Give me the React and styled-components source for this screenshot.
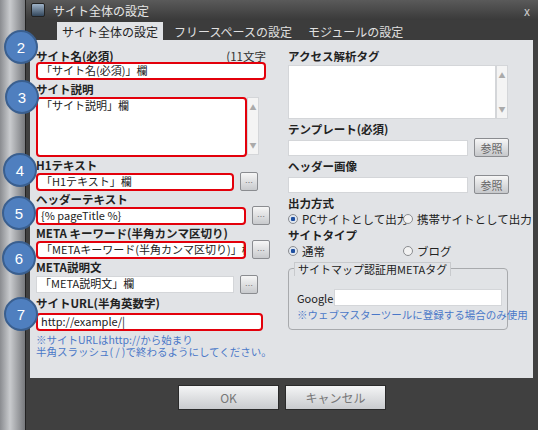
import styled, { createGlobalStyle } from 'styled-components';

const Global = createGlobalStyle`
  html, body { margin: 0; padding: 0; }
  body { font-family: "Noto Sans CJK JP", "Liberation Sans", sans-serif; font-size: 11px; color: #222; }
`;

const Screen = styled.div`
  width: 538px; height: 430px; display: flex; overflow: hidden; position: relative;
  background: #4a4c50;
`;
const SideStrip = styled.div`
  width: 25px; flex: none;
  background: linear-gradient(90deg, #8a8c90, #c9cbce 40%, #77797d);
`;
const Dialog = styled.div`
  flex: 1; display: flex; flex-direction: column; background: #404040;
  border-left: 1px solid #222; min-height: 0;
`;
const TitleBar = styled.div`
  height: 20px; flex: none; display: flex; align-items: center; gap: 8px; padding: 0 8px 0 5px;
  background: linear-gradient(#5a5a5a, #3a3a3a); color: #e6e6e6; font-size: 12px; overflow: hidden;
`;
const TitleIcon = styled.div`
  width: 12px; height: 12px; border-radius: 2px;
  background: linear-gradient(#9fb3c8, #33475c); border: 1px solid #222;
`;
const Close = styled.div`margin-left: auto; color: #ccc; font-size: 12px;`;
const Tabs = styled.div`
  height: 20px; flex: none; display: flex; align-items: flex-end; padding-left: 31px; gap: 6px;
  background: #3c3c3c; overflow: hidden;
`;
const Tab = styled.div`
  height: 18px; padding: 0 5px; display: flex; align-items: center; font-size: 12px;
  color: ${p => (p.$active ? '#222' : '#e0e0e0')};
  background: ${p => (p.$active ? '#e1e3e6' : 'transparent')};
`;
const Panel = styled.div`
  height: 338px; flex: none; box-sizing: border-box; margin: 0 5px 0 4px; background: #e1e3e6; overflow: hidden;
  display: grid; grid-template-columns: 232px 243px; column-gap: 20px; padding: 10px 0 0 6px;
`;
const Col = styled.div`display: flex; flex-direction: column;`;
const Label = styled.div`
  height: 12px; line-height: 12px; font-weight: bold; font-size: 11.5px;
  margin-top: ${p => p.$mt || 0}px; display: flex; justify-content: space-between; white-space: nowrap;
`;
const Hint = styled.span`font-weight: normal; color: #333; padding-right: 2px;`;
const Row = styled.div`display: flex; align-items: center; gap: 6px; margin-top: ${p => p.$mt || 0}px;`;
const Input = styled.div`
  box-sizing: border-box; height: ${p => p.$h || 18}px; width: ${p => p.$w}px; flex: none;
  background: #fff; padding: 0 3px; white-space: nowrap; overflow: hidden; font-size: 11px;
  line-height: 13px; border: ${p => (p.$red ? '2.5px solid #e3000b' : '1px solid #d4d6d9')};
  border-radius: ${p => (p.$red ? 4 : 0)}px;
`;
const AreaWrap = styled.div`display: flex; margin-top: ${p => p.$mt || 0}px;`;
const Scroll = styled.div`
  width: 12px; height: ${p => p.$h}px; flex: none; background: #f4f4f4; border: 1px solid #d4d6d9;
  display: flex; flex-direction: column; justify-content: space-between; align-items: center;
  color: #aaa; font-size: 7px; padding: 4px 0; box-sizing: border-box;
`;
const Dots = styled.div`
  width: 18px; height: 19px; flex: none; box-sizing: border-box; border: 1px solid #8a8c90;
  border-radius: 2px; background: linear-gradient(#f6f6f6, #c8cacd); color: #777;
  font-size: 8px; display: flex; align-items: flex-end; justify-content: center; padding-bottom: 2px;
`;
const RefBtn = styled.div`
  width: 35px; height: 19px; flex: none; box-sizing: border-box; border: 1px solid #8a8c90;
  border-radius: 2px; background: linear-gradient(#f6f6f6, #c6c8cb); color: #666;
  font-size: 11px; display: flex; align-items: center; justify-content: center;
`;
const Note = styled.div`color: #4a78c8; font-size: 10.5px; line-height: 12px; margin-top: 3px; white-space: nowrap;`;
const Radios = styled.div`display: grid; grid-template-columns: 115px 130px; margin-top: 3px; white-space: nowrap;`;
const Radio = styled.div`display: flex; align-items: center; gap: 4px; font-size: 11.5px; line-height: 14px;`;
const Dot = styled.span`
  width: 10px; height: 10px; border-radius: 50%; box-sizing: border-box; flex: none;
  border: 1px solid #8a8c90; background: ${p => (p.$on ? 'radial-gradient(#1f4fa0 35%, #dfe6ef 45%)' : '#f2f2f2')};
`;
const Fieldset = styled.div`
  margin-top: 10px; border: 1px solid #a8aaad; border-radius: 4px; height: 62px; width: 220px;
  position: relative; padding: 20px 0 0 8px; box-sizing: border-box; overflow: visible;
`;
const Legend = styled.div`
  position: absolute; top: -7px; left: 5px; background: #e1e3e6; padding: 0 3px;
  font-size: 11px; line-height: 13px; white-space: nowrap; border: 1px solid #c8cacd; border-bottom: none;
`;
const Footer = styled.div`flex: 1; display: flex; justify-content: center; gap: 6px; padding-top: 7px;`;
const FootBtn = styled.div`
  width: 99px; height: 23px; display: flex; align-items: center; justify-content: center;
  background: linear-gradient(#f4f5f6, #c9cbce); border: 1px solid #2a2a2a; color: #777; font-size: 12px;
`;
const Badge = styled.div`
  position: absolute; left: ${p => p.$x - 17}px; top: ${p => p.$y - 17}px; width: 34px; height: 34px;
  border-radius: 50%; box-sizing: border-box; background: #4f7fbf; border: 2px solid #3a5f8f;
  color: #fff; font-size: 15px; display: flex; align-items: center; justify-content: center;
  font-family: "Liberation Sans", sans-serif;
`;

const badges = [[2, 21, 47], [3, 22, 97], [4, 20, 170], [5, 19, 213], [6, 19, 258], [7, 21, 314]];

export default function App() {
  return (
    <Screen>
      <Global />
      <SideStrip />
      <Dialog>
        <TitleBar><TitleIcon /><span>サイト全体の設定</span><Close>x</Close></TitleBar>
        <Tabs>
          <Tab $active>サイト全体の設定</Tab>
          <Tab>フリースペースの設定</Tab>
          <Tab>モジュールの設定</Tab>
        </Tabs>
        <Panel>
          <Col>
            <Label>サイト名(必須)<Hint>(11文字</Hint></Label>
            <Input $red $w={230} $h={18}>「サイト名(必須)」欄</Input>
            <Label $mt={3}>サイト説明</Label>
            <AreaWrap $mt={2}>
              <Input $red $w={211} $h={60}>「サイト説明」欄</Input>
              <Scroll $h={58}><span>▲</span><span>▼</span></Scroll>
            </AreaWrap>
            <Label $mt={2}>H1テキスト</Label>
            <Row $mt={1}><Input $red $w={198} $h={18}>「H1テキスト」欄</Input><Dots>…</Dots></Row>
            <Label $mt={2}>ヘッダーテキスト</Label>
            <Row $mt={1}><Input $red $w={210} $h={18}>{'{% pageTitle %}'}</Input><Dots>…</Dots></Row>
            <Label $mt={2}>META キーワード(半角カンマ区切り)</Label>
            <Row $mt={1}><Input $red $w={210} $h={18}>「METAキーワード(半角カンマ区切り)」欄</Input><Dots>…</Dots></Row>
            <Label $mt={2}>META説明文</Label>
            <Row $mt={2}><Input $w={198} $h={17}>「META説明文」欄</Input><Dots>…</Dots></Row>
            <Label $mt={3}>サイトURL(半角英数字)</Label>
            <Row $mt={4}><Input $red $w={227} $h={18}>http://example/|</Input></Row>
            <Note>※サイトURLはhttp://から始まり<br />半角スラッシュ( / )で終わるようにしてください。</Note>
          </Col>
          <Col>
            <Label>アクセス解析タグ</Label>
            <AreaWrap $mt={3}>
              <Input $w={208} $h={54} />
              <Scroll $h={54}><span>▲</span><span>▼</span></Scroll>
            </AreaWrap>
            <Label $mt={4}>テンプレート(必須)</Label>
            <Row $mt={3}><Input $w={180} $h={16} /><RefBtn>参照</RefBtn></Row>
            <Label $mt={3}>ヘッダー画像</Label>
            <Row $mt={3}><Input $w={180} $h={16} /><RefBtn>参照</RefBtn></Row>
            <Label $mt={3}>出力方式</Label>
            <Radios>
              <Radio><Dot $on />PCサイトとして出力</Radio>
              <Radio><Dot />携帯サイトとして出力</Radio>
            </Radios>
            <Label $mt={3}>サイトタイプ</Label>
            <Radios>
              <Radio><Dot $on />通常</Radio>
              <Radio><Dot />ブログ</Radio>
            </Radios>
            <Fieldset>
              <Legend>サイトマップ認証用METAタグ</Legend>
              <Row><span>Google</span><Input $w={168} $h={17} style={{ marginLeft: -5 }} /></Row>
              <Note>※ウェブマスターツールに登録する場合のみ使用</Note>
            </Fieldset>
          </Col>
        </Panel>
        <Footer><FootBtn>OK</FootBtn><FootBtn>キャンセル</FootBtn></Footer>
      </Dialog>
      {badges.map(([n, x, y]) => <Badge key={n} $x={x} $y={y}>{n}</Badge>)}
    </Screen>
  );
}
